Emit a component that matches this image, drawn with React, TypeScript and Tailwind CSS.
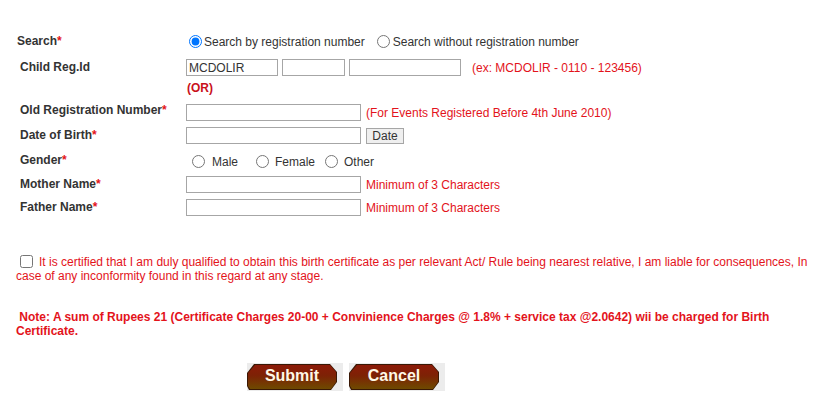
import React from "react";

const label = "font-bold text-[12px] text-[#333]";
const hint = "text-[12px] text-[#e3131b]";
const input = "h-[17px] border border-[#a6a6a6] bg-white px-[2px] text-[12px] text-[#333] outline-none";

function Star() {
  return <span className="text-[#e3131b]">*</span>;
}

function ImgButton({ text }: { text: string }) {
  return (
    <div className="w-[96px] h-[28px] bg-[#ececec] flex items-center">
      <div className="w-[90px] h-[26px] bg-[#3a1805] [clip-path:polygon(7px_0,83px_0,90px_8px,90px_18px,84px_26px,2px_26px,0_22px,0_9px)] p-px">
        <button className="w-full h-full bg-[linear-gradient(to_bottom,#8c1a08_0%,#7d2205_45%,#6e4a00_100%)] [clip-path:polygon(7px_0,82px_0,88px_7px,88px_17px,83px_24px,2px_24px,0_21px,0_8px)] text-[16px] font-bold text-[#fff8e6] leading-none pb-[2px]">
          {text}
        </button>
      </div>
    </div>
  );
}

export default function App() {
  return (
    <div className="bg-white w-[813px] h-[400px] font-['Liberation_Sans',Arial,sans-serif] text-[12px] text-[#333]">
      {/* Form rows */}
      <div className="pt-[33px] flex flex-col">
        <div className="flex h-[17px] items-center">
          <div className={`${label} w-[187px] pl-[17px] -mt-[2px]`}>
            Search<Star />
          </div>
          <label className="flex items-center gap-[2px] text-[12px] text-[#333]">
            <input type="radio" name="mode" defaultChecked className="m-0 w-[13px] h-[13px] ml-[2px]" />
            Search by registration number
          </label>
          <label className="flex items-center gap-[3px] ml-[12px] text-[12px] text-[#333]">
            <input type="radio" name="mode" className="m-0 w-[13px] h-[13px]" />
            Search without registration number
          </label>
        </div>

        <div className="flex items-center mt-[9px] h-[17px]">
          <div className={`${label} w-[186px] pl-[20px] -mt-[2px]`}>Child Reg.Id</div>
          <input className={`${input} w-[92px]`} defaultValue="MCDOLIR" />
          <input className={`${input} w-[63px] ml-[4px]`} />
          <input className={`${input} w-[112px] ml-[4px]`} />
          <span className={`${hint} ml-[11px]`}>(ex: MCDOLIR - 0110 - 123456)</span>
        </div>

        <div className="pl-[187px] mt-[3px] text-[12px] font-bold text-[#c9101a]">(OR)</div>

        <div className="flex items-center mt-[7px] h-[17px]">
          <div className={`${label} w-[186px] pl-[20px] -mt-[5px]`}>
            Old Registration Number<Star />
          </div>
          <input className={`${input} w-[175px]`} />
          <span className={`${hint} ml-[5px]`}>(For Events Registered Before 4th June 2010)</span>
        </div>

        <div className="flex items-center mt-[6px] h-[17px]">
          <div className={`${label} w-[186px] pl-[20px] -mt-[1px]`}>
            Date of Birth<Star />
          </div>
          <input className={`${input} w-[175px]`} />
          <button className="ml-[5px] w-[38px] h-[16px] border border-[#a6a6a6] bg-[#efefef] text-[12px] text-[#333] leading-none">
            Date
          </button>
        </div>

        <div className="flex items-center mt-[8px] h-[17px]">
          <div className={`${label} w-[186px] pl-[20px] -mt-[2px]`}>
            Gender<Star />
          </div>
          <label className="flex items-center gap-[7px] ml-[6px] mt-[2px]">
            <input type="radio" name="g" className="m-0 w-[13px] h-[13px]" />
            Male
          </label>
          <label className="flex items-center gap-[6px] ml-[18px] mt-[2px]">
            <input type="radio" name="g" className="m-0 w-[13px] h-[13px]" />
            Female
          </label>
          <label className="flex items-center gap-[6px] ml-[10px] mt-[2px]">
            <input type="radio" name="g" className="m-0 w-[13px] h-[13px]" />
            Other
          </label>
        </div>

        <div className="flex items-center mt-[7px] h-[17px]">
          <div className={`${label} w-[186px] pl-[20px] -mt-[1px]`}>
            Mother Name<Star />
          </div>
          <input className={`${input} w-[175px]`} />
          <span className={`${hint} ml-[5px]`}>Minimum of 3 Characters</span>
        </div>

        <div className="flex items-center mt-[6px] h-[17px]">
          <div className={`${label} w-[186px] pl-[20px] -mt-[1px]`}>
            Father Name<Star />
          </div>
          <input className={`${input} w-[175px]`} />
          <span className={`${hint} ml-[5px]`}>Minimum of 3 Characters</span>
        </div>
      </div>

      {/* Declaration */}
      <p className={`${hint} mt-[39px] pl-[16px] pr-[2px] leading-[14px]`}>
        <input type="checkbox" className="m-0 ml-[4px] mr-[6px] w-[13px] h-[13px] align-[-2px]" />
        It is certified that I am duly qualified to obtain this birth certificate as per relevant Act/ Rule being nearest relative, I am liable for consequences, In case of any inconformity found in this regard at any stage.
      </p>

      {/* Note */}
      <p className="mt-[27px] pl-[16px] pr-[20px] text-[12px] font-bold text-[#e3131b] leading-[14px]">
        &nbsp;Note: A sum of Rupees 21 (Certificate Charges 20-00 + Convinience Charges @ 1.8% + service tax @2.0642) wii be charged for Birth Certificate.
      </p>

      {/* Actions */}
      <div className="flex gap-[6px] pl-[247px] mt-[25px]">
        <ImgButton text="Submit" />
        <ImgButton text="Cancel" />
      </div>
    </div>
  );
}
